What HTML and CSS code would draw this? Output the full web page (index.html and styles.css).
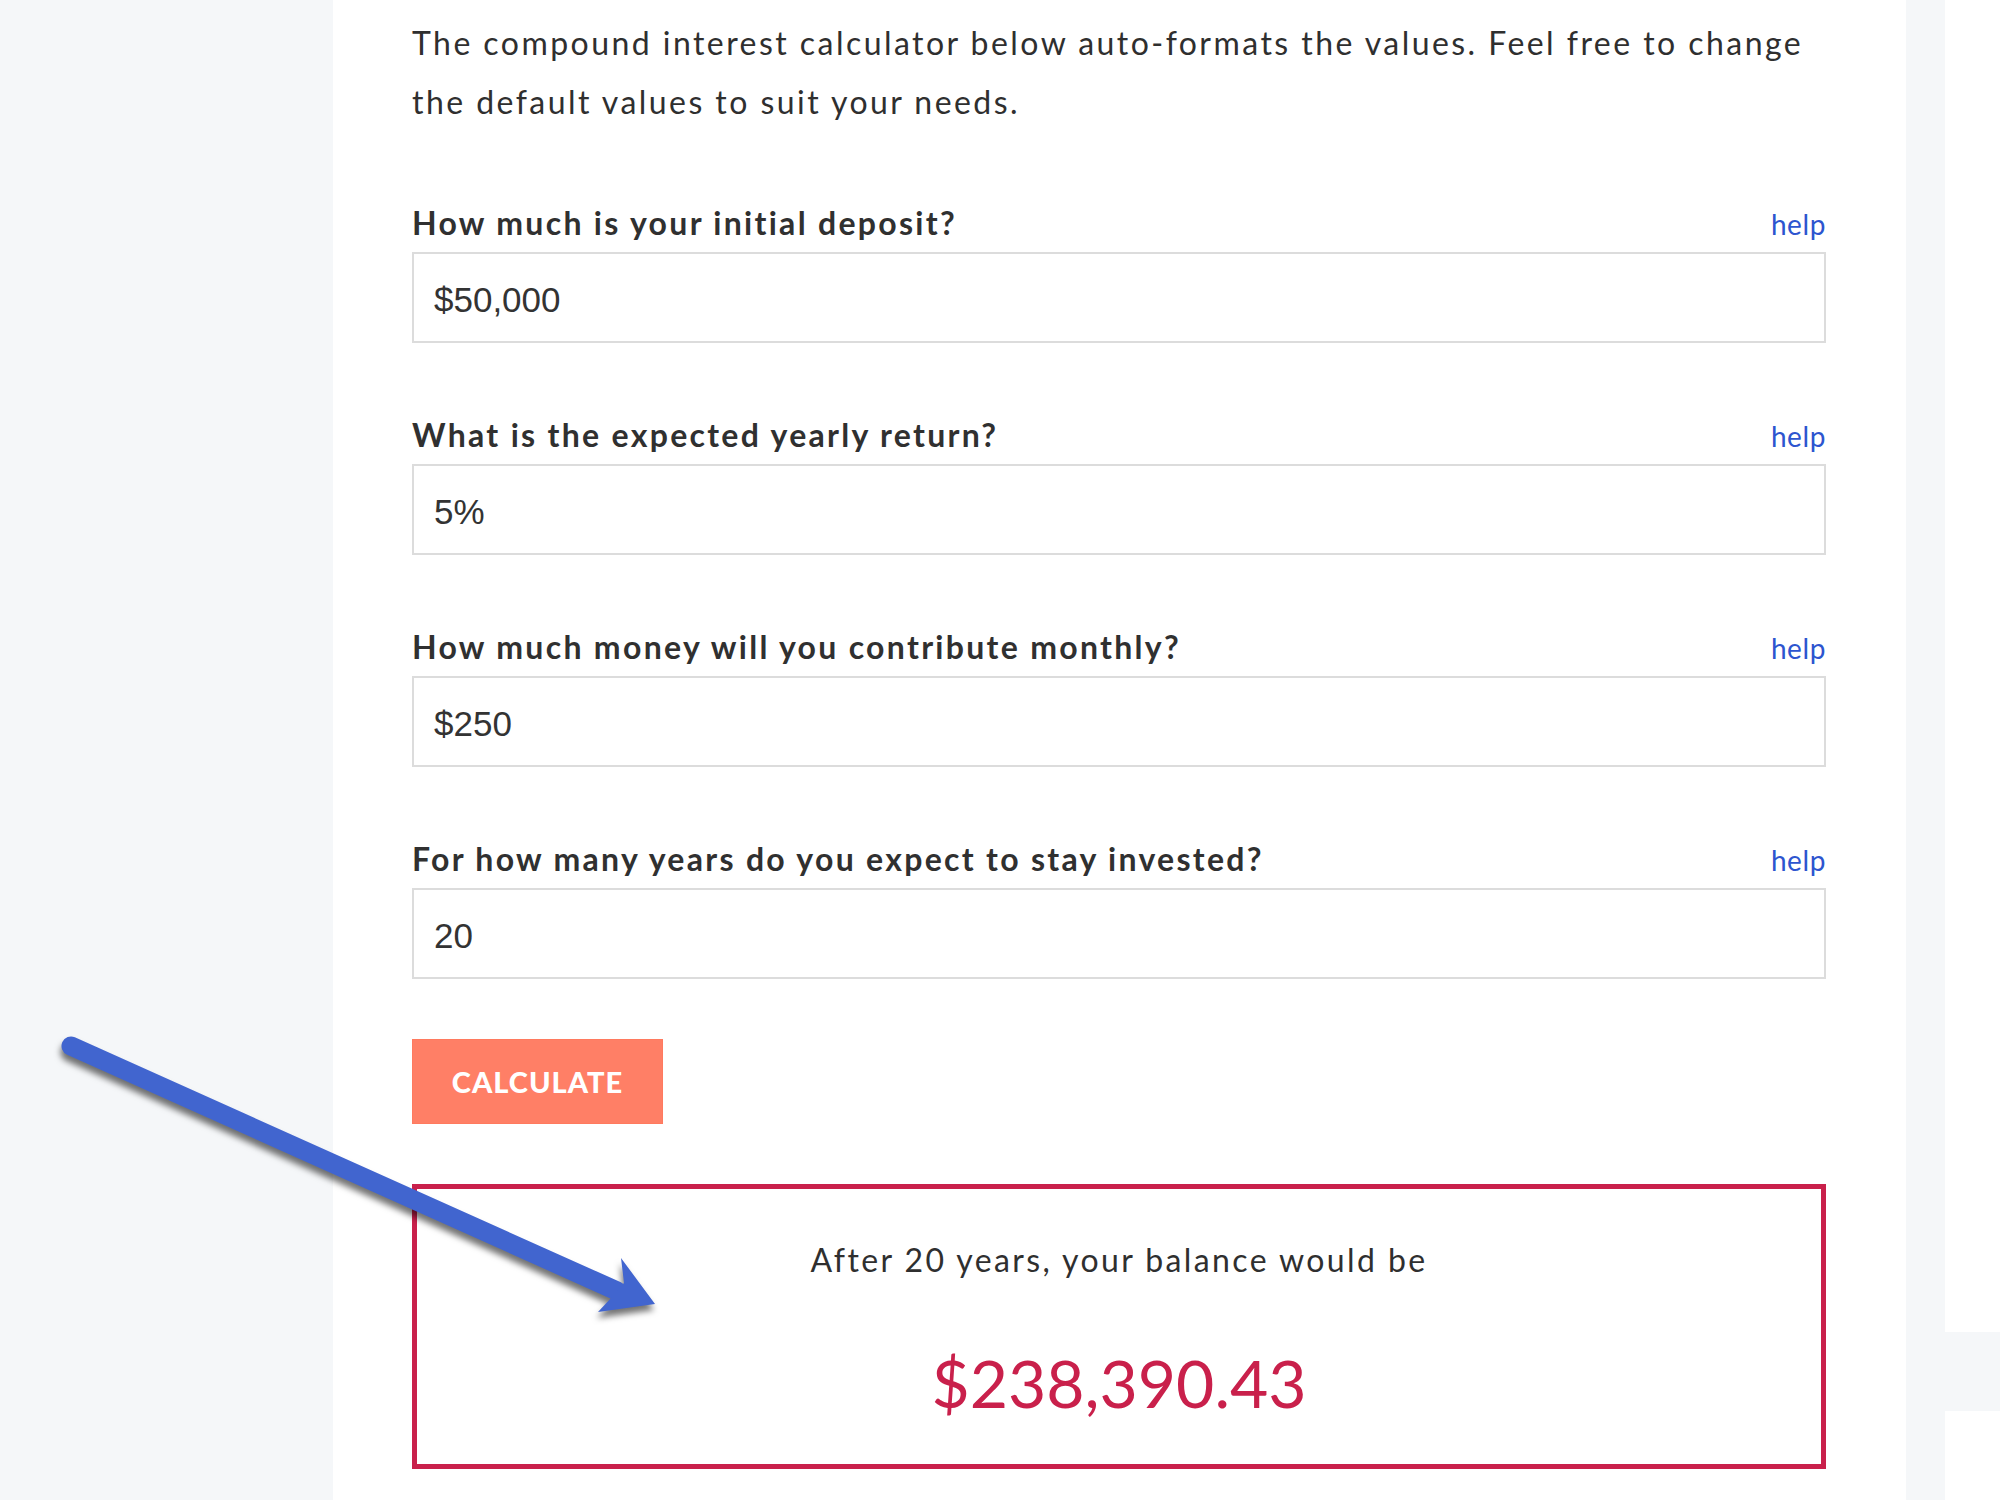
FILE: index.html
```html
<!DOCTYPE html>
<html lang="en">
<head>
<meta charset="utf-8">
<title>Compound interest calculator</title>
<link rel="stylesheet" href="styles.css">
</head>
<body>
<div class="page">
  <div class="gutter"></div>
  <main class="main">
    <p class="intro">The compound interest calculator below auto-formats the values. Feel free to change<br>the default values to suit your needs.</p>

    <div class="field">
      <div class="label-row"><label class="label">How much is your initial deposit?</label><a class="help" href="#">help</a></div>
      <div class="input">$50,000</div>
    </div>
    <div class="field">
      <div class="label-row"><label class="label">What is the expected yearly return?</label><a class="help" href="#">help</a></div>
      <div class="input">5%</div>
    </div>
    <div class="field">
      <div class="label-row"><label class="label">How much money will you contribute monthly?</label><a class="help" href="#">help</a></div>
      <div class="input">$250</div>
    </div>
    <div class="field">
      <div class="label-row"><label class="label">For how many years do you expect to stay invested?</label><a class="help" href="#">help</a></div>
      <div class="input">20</div>
    </div>

    <button class="calc">CALCULATE</button>

    <div class="result">
      <div class="result-text">After 20 years, your balance would be</div>
      <div class="result-amount">$238,390.43</div>
    </div>
  </main>
  <aside class="side">
    <div class="side-card side-card-top"></div>
    <div class="side-card side-card-bottom"></div>
  </aside>
</div>

<svg class="arrow" width="2000" height="1500" viewBox="0 0 2000 1500" aria-hidden="true">
  <g class="arrow-g">
    <line x1="71" y1="1046" x2="617" y2="1291" stroke="#4165cf" stroke-width="19" stroke-linecap="round"/>
    <path d="M624 1283 L621 1258 L655 1304 L598 1312 L611 1298 Z" fill="#4165cf"/>
  </g>
</svg>
</body>
</html>
```

FILE: styles.css
```css
html, body {
  margin: 0;
  padding: 0;
}
body {
  background: #f5f7f9;
  position: relative;
  width: 2000px;
  height: 1500px;
  overflow: hidden;
  font-family: "Lato", "Noto Sans", sans-serif;
  color: #2f2f2f;
}
.page {
  display: flex;
  align-items: flex-start;
  height: 1500px;
}
.gutter {
  width: 333px;
  flex: none;
}
.main {
  width: 1573px;
  flex: none;
  box-sizing: border-box;
  background: #fff;
  height: 1500px;
  padding: 14px 80px 0 79px;
}
.intro {
  margin: 0 0 72px 0;
  font-size: 32px;
  line-height: 58.5px;
  letter-spacing: 2.45px;
  color: #2f2f2f;
  white-space: nowrap;
}
.field {
  margin-bottom: 72px;
}
.label-row {
  display: flex;
  justify-content: space-between;
  align-items: baseline;
  height: 40px;
  line-height: 40px;
  margin-bottom: 9px;
}
.label {
  font-weight: 700;
  font-size: 32px;
  letter-spacing: 2.3px;
  color: #303030;
}
.help {
  font-size: 28px;
  letter-spacing: 0.6px;
  color: #2d55cf;
  text-decoration: none;
}
.input {
  box-sizing: border-box;
  height: 91px;
  border: 2px solid #dcdcdc;
  padding: 4px 20px 0 20px;
  display: flex;
  align-items: center;
  font-family: "Liberation Sans", Arial, sans-serif;
  font-size: 35px;
  color: #333;
}
.calc {
  display: block;
  margin: -12px 0 60px 0;
  width: 251px;
  height: 85px;
  border: 1px solid #ff7a5f;
  background: #ff7f66;
  color: #fff;
  font-family: "Lato", sans-serif;
  font-weight: 900;
  font-size: 29px;
  letter-spacing: 1px;
  padding: 0;
}
.result {
  box-sizing: border-box;
  height: 285px;
  border: 5px solid #c9204b;
  padding-top: 49px;
  text-align: center;
}
.result-text {
  font-size: 32px;
  line-height: 44px;
  letter-spacing: 2.4px;
  color: #2f2f2f;
}
.result-amount {
  margin-top: 61px;
  font-size: 66px;
  line-height: 80px;
  color: #c9204b;
}
.side {
  margin-left: 39px;
  flex: 1;
  display: flex;
  flex-direction: column;
  gap: 79px;
}
.side-card {
  background: #fff;
}
.side-card-top {
  height: 1332px;
}
.side-card-bottom {
  height: 89px;
}
.arrow {
  position: absolute;
  left: 0;
  top: 0;
  pointer-events: none;
}
.arrow-g {
  filter: drop-shadow(-1px 6px 3px rgba(0, 0, 0, 0.55));
}
```
